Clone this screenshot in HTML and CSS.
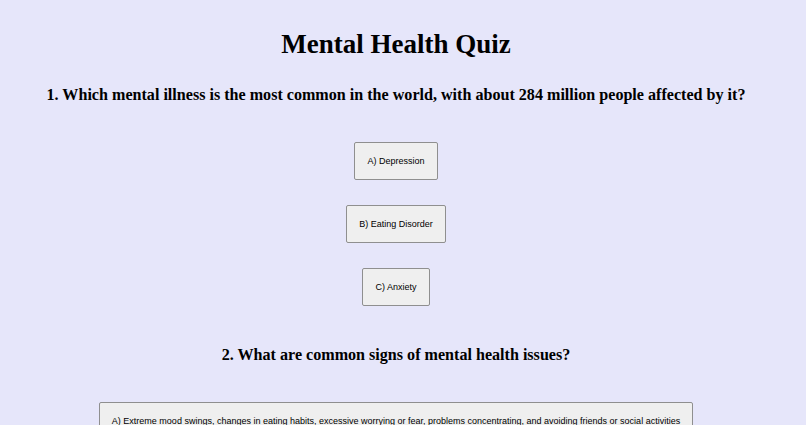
FILE: index.html
```html
<!DOCTYPE html>
<html>
<head>
<meta charset="utf-8">
<link rel="stylesheet" href="styles.css">
</head>
<body>
<h1 class="title">Mental Health Quiz</h1>
<div class="question">
  <h2 class="q-text">1. Which mental illness is the most common in the world, with about 284 million people affected by it?</h2>
  <div class="options">
    <button class="opt">A) Depression</button>
    <button class="opt">B) Eating Disorder</button>
    <button class="opt">C) Anxiety</button>
  </div>
</div>
<div class="question">
  <h2 class="q-text">2. What are common signs of mental health issues?</h2>
  <div class="options">
    <button class="opt">A) Extreme mood swings, changes in eating habits, excessive worrying or fear, problems concentrating, and avoiding friends or social activities</button>
  </div>
</div>
</body>
</html>
```
FILE: styles.css
```css
html, body {
  margin: 0;
  padding: 0;
}
body {
  background: #e6e6fa;
  font-family: "Liberation Serif", "Times New Roman", serif;
  color: #000;
  text-align: center;
  padding: 1px 14px 0 0;
}
.title {
  font-size: 27px;
  margin: 26px 0 0;
  line-height: 34px;
}
.q-text {
  font-size: 16.1px;
  margin: 24px 0 0;
  line-height: 20px;
}
.options {
  display: flex;
  flex-direction: column;
  align-items: center;
  gap: 25px;
  margin-top: 37px;
}
.opt {
  font-family: "Liberation Sans", Arial, sans-serif;
  font-size: 9px;
  background: #efefef;
  border: 1px solid #8f8f8f;
  border-radius: 2px;
  padding: 13px 12px;
  color: #000;
  line-height: 10px;
}
.question + .question .q-text {
  margin-top: 39px;
}
.question + .question .options {
  margin-top: 37px;
}
```
